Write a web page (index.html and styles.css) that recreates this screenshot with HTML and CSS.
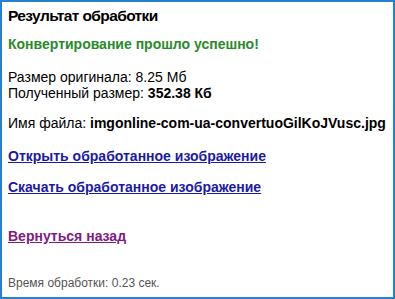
FILE: index.html
```html
<!DOCTYPE html>
<html lang="ru">
<head>
    <meta charset="UTF-8">
    <title>Результат обработки</title>
    <link rel="stylesheet" href="styles.css">
</head>
<body>
    <div class="result-box">
        <h1 class="title">Результат обработки</h1>
        <p class="success">Конвертирование прошло успешно!</p>
        <p class="sizes">
            Размер оригинала: 8.25 Мб<br>
            Полученный размер: <b>352.38 Кб</b>
        </p>
        <p class="file-name">Имя файла: <b>imgonline-com-ua-convertuoGilKoJVusc.jpg</b></p>
        <p class="action first"><a href="#" class="link">Открыть обработанное изображение</a></p>
        <p class="action"><a href="#" class="link">Скачать обработанное изображение</a></p>
        <p class="back"><a href="#" class="link visited">Вернуться назад</a></p>
        <p class="timing">Время обработки: 0.23 сек.</p>
    </div>
</body>
</html>
```

FILE: styles.css
```css
body {
    margin: 0;
    background: #fff;
    font-family: "Liberation Sans", Arial, sans-serif;
    color: #000;
}
.result-box {
    box-sizing: border-box;
    width: 395px;
    height: 299px;
    border: 2px solid #2580d0;
    padding: 5px 6px;
    font-size: 14px;
    line-height: 16px;
    overflow: hidden;
}
.result-box p {
    margin: 0;
}
.title {
    margin: 0;
    font-size: 15.5px;
    line-height: 18px;
    letter-spacing: -0.6px;
}
.result-box .success {
    margin-top: 11px;
    font-weight: bold;
    color: #2a8a2a;
}
.result-box .sizes {
    margin-top: 17px;
}
.result-box .file-name {
    margin-top: 14px;
    white-space: nowrap;
}
.result-box .action {
    margin-top: 15px;
}
.result-box .action.first {
    margin-top: 17px;
}
.link {
    color: #1a1aa8;
    font-weight: bold;
}
.visited {
    color: #801a80;
}
.result-box .back {
    margin-top: 33px;
}
.result-box .timing {
    margin-top: 32px;
    font-size: 12px;
    line-height: 14px;
    color: #555;
}
```
